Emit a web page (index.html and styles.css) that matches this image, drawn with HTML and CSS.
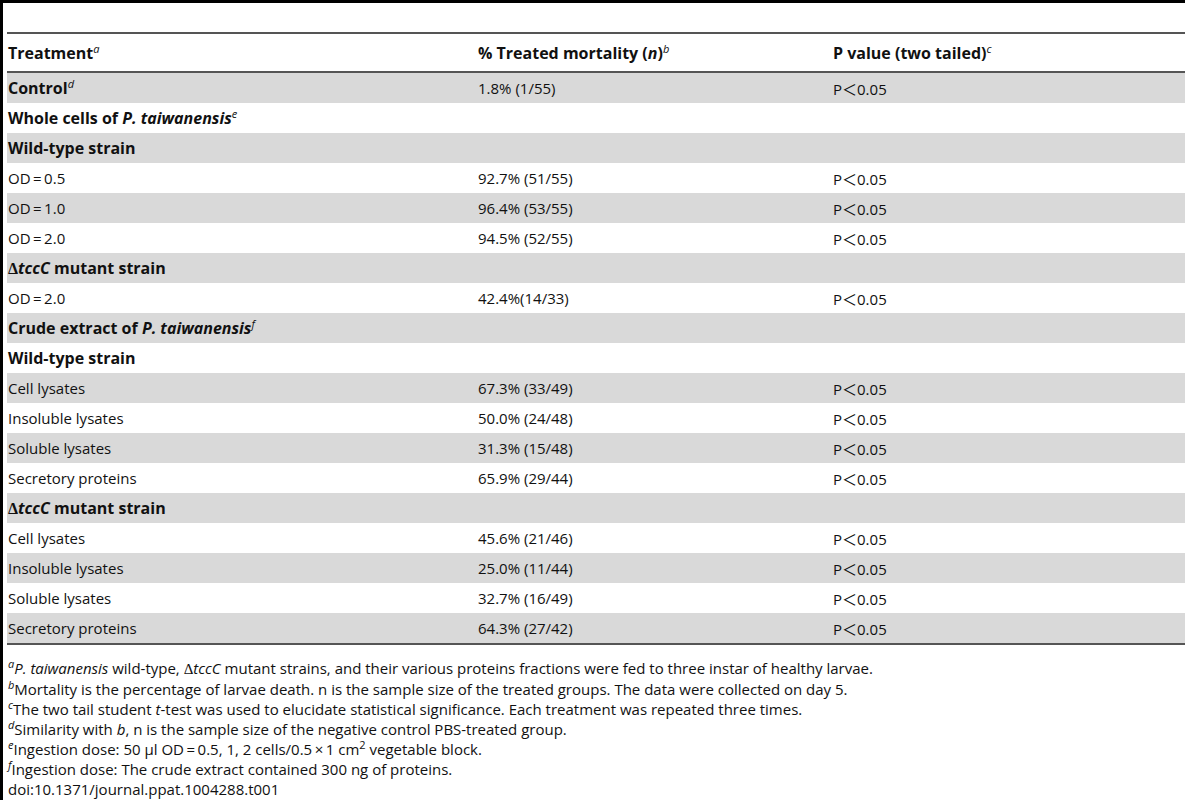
FILE: index.html
```html
<!DOCTYPE html>
<html>
<head>
<meta charset="utf-8">
<link rel="stylesheet" href="styles.css">
</head>
<body>
<div class="frame">
  <div class="caption-space"></div>
  <table class="data">
    <colgroup>
      <col class="c1"><col class="c2"><col class="c3">
    </colgroup>
    <thead>
      <tr>
        <th>Treatment<sup>a</sup></th>
        <th>% Treated mortality (<i>n</i>)<sup>b</sup></th>
        <th>P value (two tailed)<sup>c</sup></th>
      </tr>
    </thead>
    <tbody>
      <tr class="g"><td class="b">Control<sup>d</sup></td><td>1.8% (1/55)</td><td>P<span class="lt">＜</span>0.05</td></tr>
      <tr><td class="b">Whole cells of <i>P. taiwanensis</i><sup>e</sup></td><td></td><td></td></tr>
      <tr class="g"><td class="b">Wild-type strain</td><td></td><td></td></tr>
      <tr><td>OD&#8201;=&#8201;0.5</td><td>92.7% (51/55)</td><td>P<span class="lt">＜</span>0.05</td></tr>
      <tr class="g"><td>OD&#8201;=&#8201;1.0</td><td>96.4% (53/55)</td><td>P<span class="lt">＜</span>0.05</td></tr>
      <tr><td>OD&#8201;=&#8201;2.0</td><td>94.5% (52/55)</td><td>P<span class="lt">＜</span>0.05</td></tr>
      <tr class="g"><td class="b"><span class="delta">Δ</span><i>tccC</i> mutant strain</td><td></td><td></td></tr>
      <tr><td>OD&#8201;=&#8201;2.0</td><td>42.4%(14/33)</td><td>P<span class="lt">＜</span>0.05</td></tr>
      <tr class="g"><td class="b">Crude extract of <i>P. taiwanensis</i><sup>f</sup></td><td></td><td></td></tr>
      <tr><td class="b">Wild-type strain</td><td></td><td></td></tr>
      <tr class="g"><td>Cell lysates</td><td>67.3% (33/49)</td><td>P<span class="lt">＜</span>0.05</td></tr>
      <tr><td>Insoluble lysates</td><td>50.0% (24/48)</td><td>P<span class="lt">＜</span>0.05</td></tr>
      <tr class="g"><td>Soluble lysates</td><td>31.3% (15/48)</td><td>P<span class="lt">＜</span>0.05</td></tr>
      <tr><td>Secretory proteins</td><td>65.9% (29/44)</td><td>P<span class="lt">＜</span>0.05</td></tr>
      <tr class="g"><td class="b"><span class="delta">Δ</span><i>tccC</i> mutant strain</td><td></td><td></td></tr>
      <tr><td>Cell lysates</td><td>45.6% (21/46)</td><td>P<span class="lt">＜</span>0.05</td></tr>
      <tr class="g"><td>Insoluble lysates</td><td>25.0% (11/44)</td><td>P<span class="lt">＜</span>0.05</td></tr>
      <tr><td>Soluble lysates</td><td>32.7% (16/49)</td><td>P<span class="lt">＜</span>0.05</td></tr>
      <tr class="g"><td>Secretory proteins</td><td>64.3% (27/42)</td><td>P<span class="lt">＜</span>0.05</td></tr>
    </tbody>
  </table>
  <div class="notes">
    <p><sup>a</sup><i>P. taiwanensis</i> wild-type, <span class="delta">Δ</span><i>tccC</i> mutant strains, and their various proteins fractions were fed to three instar of healthy larvae.</p>
    <p><sup>b</sup>Mortality is the percentage of larvae death. n is the sample size of the treated groups. The data were collected on day 5.</p>
    <p><sup>c</sup>The two tail student <i>t</i>-test was used to elucidate statistical significance. Each treatment was repeated three times.</p>
    <p><sup>d</sup>Similarity with <i>b</i>, n is the sample size of the negative control PBS-treated group.</p>
    <p><sup>e</sup>Ingestion dose: 50 µl OD&#8201;=&#8201;0.5, 1, 2 cells/0.5&#8201;×&#8201;1 cm<sup class="up">2</sup> vegetable block.</p>
    <p><sup>f</sup>Ingestion dose: The crude extract contained 300 ng of proteins.</p>
    <p>doi:10.1371/journal.ppat.1004288.t001</p>
  </div>
</div>
</body>
</html>
```

FILE: styles.css
```css
html, body {
  margin: 0;
  padding: 0;
  background: #fff;
  overflow: hidden;
}
body {
  font-family: "Open Sans", "Noto Sans", sans-serif;
  font-size: 15px;
  color: #111;
}
.frame {
  border-left: 3px solid #000;
  border-top: 3px solid #000;
  padding-left: 4px;
  min-height: 800px;
  box-sizing: border-box;
}
.caption-space {
  height: 29px;
}
.data {
  width: 1178px;
  border-collapse: collapse;
  table-layout: fixed;
  border-top: 2px solid #555;
  border-bottom: 2px solid #555;
}
.c1 { width: 470px; }
.c2 { width: 355px; }
.c3 { width: 353px; }
.data th {
  text-align: left;
  font-weight: 700;
  font-size: 16px;
  height: 37px;
  padding: 0 0 0 1px;
  border-bottom: 2px solid #555;
  vertical-align: middle;
}
.data td {
  height: 30px;
  padding: 0 0 0 1px;
  vertical-align: middle;
  white-space: nowrap;
}
.data tr.g td {
  background: #d9d9d9;
}
.data td.b {
  font-weight: 700;
  font-size: 16px;
}
sup {
  font-size: 11px;
  font-style: italic;
  font-weight: 400;
  line-height: 0;
  vertical-align: 6px;
}
sup.up {
  font-style: normal;
}
.lt {
  font-family: "Noto Sans CJK JP", sans-serif;
  font-weight: 400;
}
.delta {
  font-family: "Liberation Serif", serif;
  font-style: normal;
}
.notes {
  padding-top: 13px;
}
.notes p {
  margin: 0;
  line-height: 20px;
  padding-left: 1px;
  white-space: nowrap;
}
```
